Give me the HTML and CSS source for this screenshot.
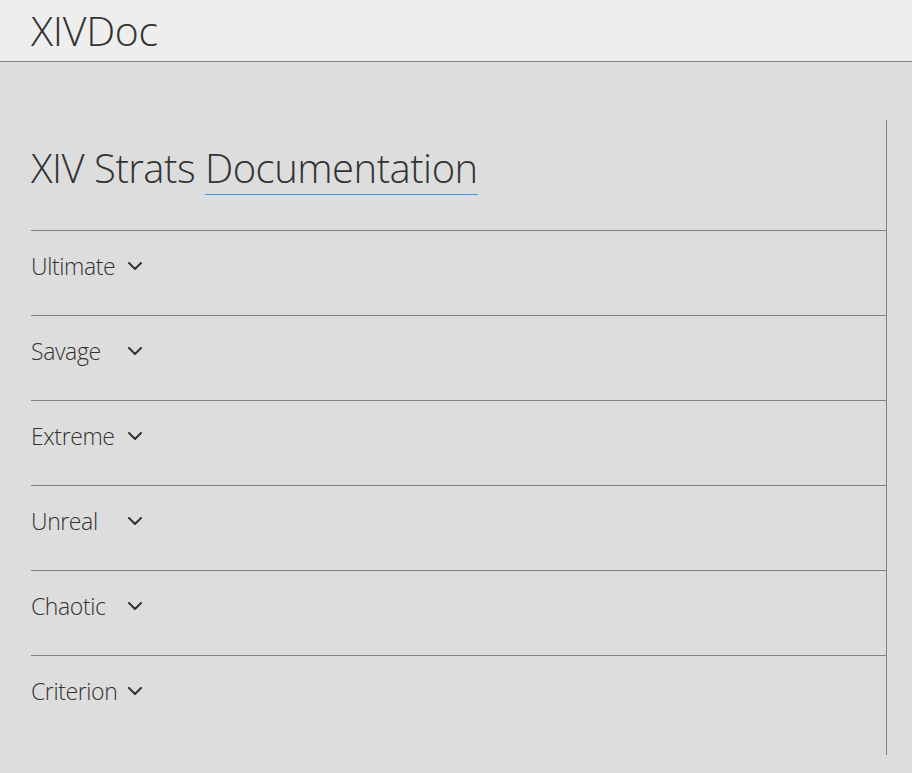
FILE: index.html
```html
<!DOCTYPE html>
<html lang="en">
<head>
<meta charset="utf-8">
<title>XIVDoc</title>
<link rel="stylesheet" href="styles.css">
</head>
<body>
<header class="header">
  <div class="brand">XIVDoc</div>
</header>
<main class="main">
  <section class="panel">
    <h1 class="title">XIV Strats <a class="title-link" href="#">Documentation</a></h1>
    <ul class="list">
      <li class="row"><span class="label">Ultimate</span><svg class="chev" width="14" height="8" viewBox="0 0 14 8"><polyline points="1,1 7,7 13,1"/></svg></li>
      <li class="row"><span class="label">Savage</span><svg class="chev" width="14" height="8" viewBox="0 0 14 8"><polyline points="1,1 7,7 13,1"/></svg></li>
      <li class="row"><span class="label">Extreme</span><svg class="chev" width="14" height="8" viewBox="0 0 14 8"><polyline points="1,1 7,7 13,1"/></svg></li>
      <li class="row"><span class="label">Unreal</span><svg class="chev" width="14" height="8" viewBox="0 0 14 8"><polyline points="1,1 7,7 13,1"/></svg></li>
      <li class="row"><span class="label">Chaotic</span><svg class="chev" width="14" height="8" viewBox="0 0 14 8"><polyline points="1,1 7,7 13,1"/></svg></li>
      <li class="row"><span class="label">Criterion</span><svg class="chev" width="14" height="8" viewBox="0 0 14 8"><polyline points="1,1 7,7 13,1"/></svg></li>
    </ul>
  </section>
</main>
</body>
</html>
```
FILE: styles.css
```css
html, body {
  margin: 0;
  padding: 0;
}
body {
  background: #dddddd;
  color: #333333;
  font-family: "Open Sans", "Noto Sans", sans-serif;
  font-weight: 300;
}
.header {
  background: #eeeeee;
  height: 61px;
  border-bottom: 1px solid #808080;
  padding-left: 31px;
  display: flex;
  align-items: center;
}
.brand {
  font-size: 41px;
  line-height: 41px;
  letter-spacing: -0.3px;
}
.main {
  padding: 58px 25px 18px 31px;
}
.panel {
  border-right: 1px solid #808080;
  padding-top: 28px;
  padding-bottom: 15px;
}
.title {
  margin: 0 0 42px 0;
  height: 40px;
  font-size: 40px;
  line-height: 40px;
  font-weight: 300;
  letter-spacing: -0.5px;
  white-space: nowrap;
}
.title-link {
  display: inline-block;
  color: #333333;
  text-decoration: none;
  line-height: 40px;
  padding-bottom: 6px;
  border-bottom: 1px solid #3d9af5;
}
.list {
  list-style: none;
  margin: 0;
  padding: 0;
}
.row {
  box-sizing: border-box;
  height: 85px;
  border-top: 1px solid #808080;
  padding-top: 24px;
  display: flex;
  align-items: flex-start;
}
.label {
  font-size: 23px;
  line-height: 23px;
  letter-spacing: -0.4px;
  min-width: 89px;
}
.chev {
  margin-left: 8px;
  margin-top: 7px;
  fill: none;
  stroke: #333333;
  stroke-width: 2;
  stroke-linecap: round;
  stroke-linejoin: round;
}
```
